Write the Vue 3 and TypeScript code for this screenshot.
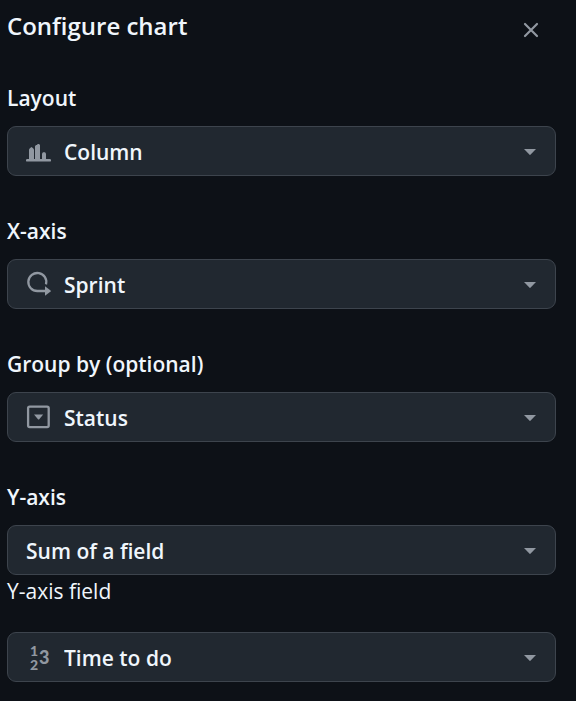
<script setup lang="ts">
import { ref } from 'vue'

type IconName = 'column' | 'sprint' | 'status' | 'number' | null

interface Field {
  id: string
  label: string
  icon: IconName
  options: string[]
  secondary?: boolean
}

const fields: Field[] = [
  { id: 'layout', label: 'Layout', icon: 'column', options: ['Column'] },
  { id: 'x-axis', label: 'X-axis', icon: 'sprint', options: ['Sprint'] },
  { id: 'group-by', label: 'Group by (optional)', icon: 'status', options: ['Status'] },
  { id: 'y-axis', label: 'Y-axis', icon: null, options: ['Sum of a field'] },
  { id: 'y-axis-field', label: 'Y-axis field', icon: 'number', options: ['Time to do'], secondary: true },
]

const values = ref<Record<string, string>>(
  Object.fromEntries(fields.map((f) => [f.id, f.options[0]])),
)
const open = ref(true)
</script>

<template>
  <aside v-if="open" class="panel" aria-labelledby="panel-title">
    <header class="header">
      <h1 id="panel-title" class="title">Configure chart</h1>
      <button class="close" type="button" aria-label="Close" @click="open = false">
        <svg viewBox="0 0 16 16" width="16" height="16" aria-hidden="true">
          <path d="M2 2 14 14M14 2 2 14" fill="none" stroke="currentColor" stroke-width="2.2" stroke-linecap="round" />
        </svg>
      </button>
    </header>
    <form class="fields" @submit.prevent>
      <div v-for="field in fields" :key="field.id" class="field" :class="{ secondary: field.secondary }">
        <label class="label" :for="field.id">{{ field.label }}</label>
        <div class="control">
          <select :id="field.id" v-model="values[field.id]" class="select" :class="{ 'with-icon': field.icon }">
            <option v-for="option in field.options" :key="option">{{ option }}</option>
          </select>
          <svg v-if="field.icon" class="icon" viewBox="0 0 26 26" width="26" height="26" aria-hidden="true">
            <g v-if="field.icon === 'column'" fill="currentColor">
              <rect x="0" y="21" width="25" height="2.6" rx="1.2" />
              <path d="M3 22V11.2L4.2 10 5.5 9 6.8 10 8 11.2V22Z" />
              <path d="M9 22V8.2L10 7.1H11L11.7 6H13L14 7.1V22Z" />
              <path d="M16 22V15.6L17 14.3H19L20 15.6V22Z" />
            </g>
            <g v-else-if="field.icon === 'sprint'">
              <path d="M20 13.4A9 9 0 1 0 11.5 20H20" fill="none" stroke="currentColor" stroke-width="2.3" />
              <path d="M19 15.2V24.8L24.6 20.4Q25 20 24.6 19.6Z" fill="currentColor" />
            </g>
            <g v-else-if="field.icon === 'status'">
              <rect x="2.1" y="2.6" width="20.6" height="20.6" rx="1.6" fill="none" stroke="currentColor" stroke-width="2.3" />
              <path d="M8 10.6H17.2L13 15.4Q12.6 15.8 12.2 15.4Z" fill="currentColor" />
            </g>
            <g v-else class="digits" fill="currentColor">
              <text x="4" y="12" font-size="14">1</text>
              <text x="4" y="26" font-size="14">2</text>
              <text x="13" y="20" font-size="18">3</text>
            </g>
          </svg>
          <svg class="caret" viewBox="0 0 12 6" width="12" height="6" aria-hidden="true">
            <path d="M0 0H12L6.4 5.8Q6 6.1 5.6 5.8Z" fill="currentColor" />
          </svg>
        </div>
      </div>
    </form>
  </aside>
</template>

<style>
body {
  background: #0d1117;
}
</style>

<style scoped>
.panel {
  box-sizing: border-box;
  padding: 8px 20px 18px 7px;
  color: #f0f6fc;
  font-family: 'Segoe UI', 'Open Sans', 'Noto Sans', sans-serif;
}

.header {
  display: flex;
  align-items: flex-start;
  justify-content: space-between;
  padding-bottom: 39px;
}

.title {
  margin: 0;
  font-size: 24px;
  font-weight: 600;
  line-height: 36px;
}

.close {
  display: flex;
  padding: 6px;
  margin: 8px 11px 0 0;
  border: 0;
  background: none;
  color: #9198a1;
  cursor: pointer;
}

.fields {
  display: flex;
  flex-direction: column;
  gap: 40px;
}

.field {
  display: flex;
  flex-direction: column;
  gap: 13px;
}

.field.secondary {
  gap: 26px;
  margin-top: -39px;
}

.label {
  font-size: 21px;
  font-weight: 600;
  line-height: 30px;
}

.secondary .label {
  font-weight: 400;
}

.control {
  display: grid;
  align-items: center;
}

.control > * {
  grid-area: 1 / 1;
}

.select {
  width: 100%;
  height: 50px;
  padding: 2px 40px 0 18px;
  border: 1px solid #3d444d;
  border-radius: 9px;
  appearance: none;
  background: #212830;
  color: inherit;
  font: inherit;
  font-size: 21px;
  font-weight: 600;
  cursor: pointer;
}

.select.with-icon {
  padding-left: 56px;
}

.icon {
  overflow: visible;
  margin-left: 19px;
  color: #9198a1;
  pointer-events: none;
}

.caret {
  justify-self: end;
  margin: 2px 20px 0 0;
  color: #9198a1;
  pointer-events: none;
}

.digits {
  font-family: Lato, sans-serif;
  font-weight: 900;
}
</style>
